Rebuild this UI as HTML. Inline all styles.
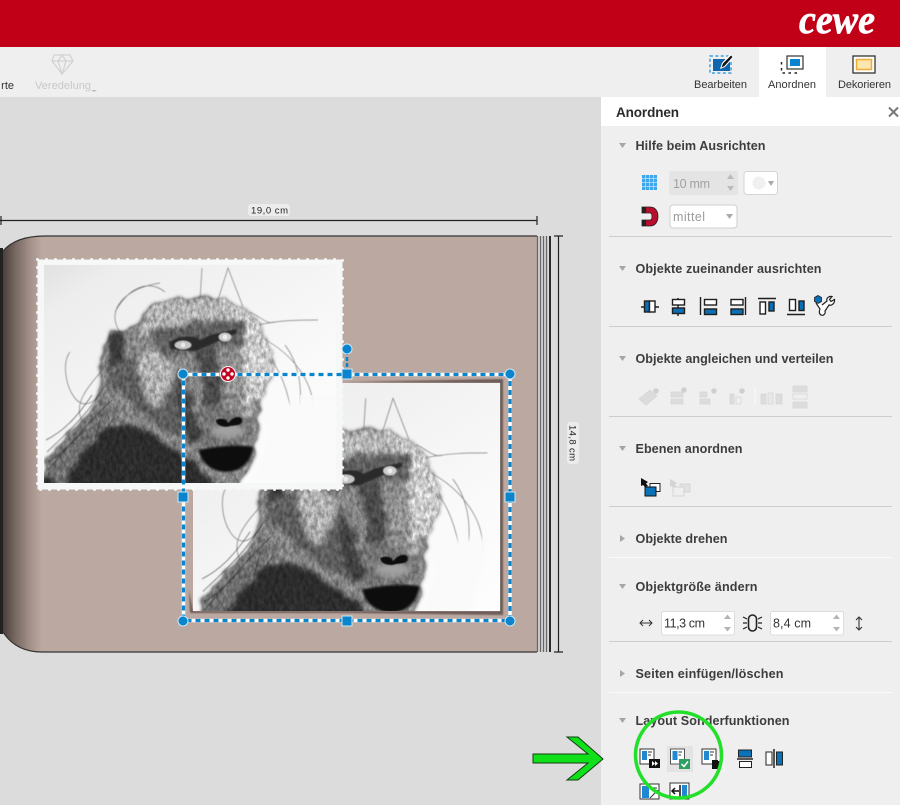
<!DOCTYPE html>
<html><head><meta charset="utf-8"><title>Anordnen</title>
<style>html,body{margin:0;padding:0;background:#dcdcdc;width:900px;height:805px;overflow:hidden}svg{display:block}
text{font-family:"Liberation Sans",sans-serif}
.h{font-weight:bold;font-size:12.600px;fill:#3d3d3d}.t{font-size:11px;fill:#333}</style></head><body>
<svg width="900" height="805" viewBox="0 0 900 805" xmlns="http://www.w3.org/2000/svg">
<defs>
<filter id="fur" x="-10%" y="-10%" width="120%" height="120%" color-interpolation-filters="sRGB">
<feTurbulence type="fractalNoise" baseFrequency="0.3 0.17" numOctaves="3" seed="7" result="n"/>
<feColorMatrix in="n" type="matrix" values="1.200 0 0 0 -.1 1.200 0 0 0 -.1 1.200 0 0 0 -.1 0 0 0 0 1" result="g"/>
<feTurbulence type="fractalNoise" baseFrequency="0.05 0.08" numOctaves="2" seed="3" result="n2"/>
<feDisplacementMap in="SourceGraphic" in2="n2" scale="14" xChannelSelector="R" yChannelSelector="G" result="d"/>
<feGaussianBlur in="d" stdDeviation="2.200" result="s"/>
<feComposite in="s" in2="g" operator="arithmetic" k1="0.7" k2="0.65" k3="0" k4="0" result="m"/>
<feComposite in="m" in2="s" operator="in"/>
</filter>
<filter id="b3"><feGaussianBlur stdDeviation="3"/></filter>
<filter id="b1"><feGaussianBlur stdDeviation="1"/></filter>
<filter id="b06" x="-10%" y="-10%" width="120%" height="120%"><feGaussianBlur stdDeviation=".7"/></filter>
<filter id="s1"><feGaussianBlur stdDeviation=".4"/></filter>
<linearGradient id="bg" x1="0" y1="0" x2="1" y2="1"><stop offset="0" stop-color="#c9c9c9"/><stop offset=".28" stop-color="#ededed"/><stop offset=".7" stop-color="#fafafa"/><stop offset="1" stop-color="#fff"/></linearGradient>
<linearGradient id="spine" x1="0" x2="1" y1="0" y2="0"><stop offset="0" stop-color="#4a3f3c"/><stop offset=".3" stop-color="#75665f"/><stop offset=".7" stop-color="#a3918a"/><stop offset="1" stop-color="#bba8a0"/></linearGradient>
<clipPath id="c1"><rect x="44" y="265" width="292" height="218"/></clipPath>
<clipPath id="c2"><rect x="193" y="383" width="307" height="228"/></clipPath>
<g id="monkey">
<rect x="-60" y="230" width="420" height="270" fill="url(#bg)"/>
<g fill="none" stroke="#555" stroke-width=".7" opacity=".75" filter="url(#s1)">
<path d="M200 300L202 268M218 300L228 268L245 312M165 292C150 280 130 285 115 312M120 332C105 310 125 288 160 283M108 380C80 440 55 370 70 352M110 362C84 390 72 405 84 425"/>
<path d="M258 325C280 320 300 320 318 320M262 338C295 355 315 385 313 412M285 345C298 362 302 385 300 405M262 350C280 365 290 395 292 420M250 312C262 318 268 325 275 322"/>
</g>
<g filter="url(#fur)">
<path d="M40 490L42 462C70 435 88 412 100 385C96 365 104 345 110 330C125 335 132 330 140 315C165 293 215 288 240 305C266 325 270 352 260 385C264 420 258 440 252 460C244 478 240 490 236 490Z" fill="#858585"/>
<path d="M215 295C245 302 270 325 274 350C276 375 262 395 258 405C250 370 240 330 215 295Z" fill="#cdcdcd"/>
<path d="M145 310C170 294 215 292 238 310C225 320 170 322 140 338Z" fill="#b3b3b3"/>
<path d="M150 335C175 322 225 318 248 322L244 345L205 350L168 358Z" fill="#5f5f5f"/>
<path d="M108 336L122 333L126 360L110 372Z" fill="#3a3a3a"/>
<path d="M40 490C55 455 90 432 125 425C160 438 185 450 200 470L218 490Z" fill="#2c2c2c"/>
<path d="M40 470C60 445 85 425 100 400L120 410C100 435 75 460 60 490Z" fill="#707070"/>
<path d="M108 378C120 400 150 425 190 442L195 395L170 365L130 360Z" fill="#5d5d5d"/>
<path d="M140 355C155 345 172 355 176 368L158 410C142 395 134 370 140 355Z" fill="#b0b0b0"/>
<path d="M243 345C256 360 258 385 250 415L236 412C234 385 236 365 243 345Z" fill="#c8c8c8"/>
<path d="M196 352L216 346L222 405L205 405Z" fill="#4a4a4a"/>
<path d="M222 352L242 348L246 412L228 408Z" fill="#929292"/>
<path d="M180 375C188 395 195 420 205 442L190 442C178 415 174 392 180 375Z" fill="#3e3e3e"/>
<path d="M198 408C210 403 246 404 252 425L250 446L203 446Z" fill="#737373"/>
</g>
<g filter="url(#b3)"><path d="M262 405C275 420 270 455 246 482L300 483L320 400Z" fill="#fafafa"/><ellipse cx="228" cy="431" rx="17" ry="7" fill="#a2a2a2"/></g>
<path d="M199 450C215 446 240 444 253 447C252 462 240 472 226 472C212 472 200 462 199 450Z" fill="#111" filter="url(#b1)"/>
<path d="M216 420C222 417 228 420 228 423C232 418 240 414 242 420C242 426 236 425 230 426C225 428 216 426 216 420Z" fill="#0c0c0c" filter="url(#s1)"/>
<path d="M170 342C178 335 195 335 200 340L210 335L236 329L237 333L212 344L196 351L170 349Z" fill="#2a2a2a" filter="url(#b06)"/>
<ellipse cx="183" cy="345" rx="8.500" ry="4.500" fill="#c6c6c6" filter="url(#s1)"/>
<circle cx="183" cy="345" r="2.300" fill="#e9e9e9"/>
<ellipse cx="225" cy="337" rx="6.500" ry="4.500" fill="#cecece" filter="url(#s1)"/>
<circle cx="225" cy="337" r="2.300" fill="#eeeeee"/>
<g fill="none" stroke="#222" stroke-width=".7" opacity=".7" filter="url(#s1)">
<path d="M105 385C90 412 70 430 47 452M112 400C90 420 70 445 48 470M118 410C105 435 90 450 70 470M100 420C95 440 92 455 92 470M125 420C115 440 112 452 112 470M92 395C75 420 62 432 46 440M85 430C70 445 60 455 48 462"/>
</g>
</g>
</defs>

<rect width="900" height="805" fill="#dcdcdc"/>
<rect width="900" height="47" fill="#c10018"/>
<text x="799" y="33" font-size="40" font-weight="bold" font-style="italic" fill="#fff" stroke="#fff" stroke-width=".7" stroke-linejoin="round" textLength="76" lengthAdjust="spacingAndGlyphs" style="font-family:'Liberation Serif',serif">cewe</text>

<!-- toolbar -->
<rect y="47" width="900" height="50" fill="#efefef"/>
<rect x="759" y="47" width="67" height="50" fill="#fff"/>
<text x="14" y="89" text-anchor="end" class="t" fill="#444">rte</text>
<g fill="none" stroke="#d2d2d2" stroke-width="1.200"><path d="M54 55H70L73 61L62 74L52 61ZM52 61H73M58 61L62 74L66 61L62 55L58 61"/></g>
<text x="35" y="89" font-size="11" fill="#c8c8c8" textLength="56">Veredelung</text>
<path d="M91 90H97L94 92Z" fill="#bbb"/>
<!-- Bearbeiten icon -->
<rect x="710" y="56" width="21" height="17" fill="none" stroke="#3ba0e0" stroke-width="1.500" stroke-dasharray="3 2.400"/>
<rect x="713" y="59" width="17" height="12" fill="#0c65ad"/>
<path d="M720 69L722 63L730 54L734 57L725 67Z" fill="#fff"/><path d="M721.500 67.500L723 63.500L731 55.500L732.500 57L724.500 66Z" fill="#111"/>
<text x="694" y="88" class="t" textLength="53">Bearbeiten</text>
<!-- Anordnen icon -->
<rect x="787" y="56" width="16" height="13" fill="#fff" stroke="#333" stroke-width="1.200"/>
<rect x="790" y="59" width="10" height="7" fill="#0a84d0"/>
<path d="M781.500 62V73H797" fill="none" stroke="#222" stroke-width="1.500" stroke-dasharray="2.500 3.500"/>
<text x="768" y="88" class="t" textLength="48">Anordnen</text>
<!-- Dekorieren icon -->
<rect x="853" y="56" width="22" height="17" fill="#fff" stroke="#333" stroke-width="1.300"/>
<rect x="856.500" y="59.500" width="15" height="10" fill="#fbe6b0" stroke="#eeaa33" stroke-width="1.500"/>
<text x="838" y="88" class="t" textLength="53">Dekorieren</text>

<!-- book -->
<path d="M3 251C12 241 25 236 45 236H537V652H42C25 652 12 646 3 632Z" fill="#bba8a0"/>
<path d="M3 251C12 241 25 237 42 236V652C25 652 12 645 3 632Z" fill="url(#spine)"/>
<rect x="0" y="248" width="3" height="386" fill="#222"/>
<path d="M3 251C12 241 25 236 45 236H537M3 632C12 646 25 652 42 652H537" fill="none" stroke="#333" stroke-width="1.200"/>
<rect x="537" y="236" width="12" height="416" fill="#dadada"/>
<g stroke="#666" stroke-width="1.300" fill="none"><path d="M537.500 236V652M540.500 236V652M543.500 236V652M546.500 236V652"/></g>
<rect x="549" y="236" width="2" height="416" fill="#2c2c2c"/>
<g stroke="#222" stroke-width="1.200" fill="none"><path d="M0 220.500H537M537 216V225M1 216V225M558.500 236V652M554 236H563M554 652H563"/></g>
<rect x="248" y="204" width="42" height="12" rx="3" fill="#ececec"/>
<text x="251" y="213.500" font-size="9.500" fill="#222" textLength="37">19,0 cm</text>
<g transform="translate(573,443) rotate(90)"><rect x="-21" y="-6" width="42" height="12" rx="3" fill="#ececec"/><text x="-18" y="3.500" font-size="9.500" fill="#222" textLength="36">14,8 cm</text></g>

<!-- photo 2 -->
<path d="M340 382L503 379V615L350 613L190 613L189 590L193 611H500V383Z" fill="#6d5c58" filter="url(#b06)"/>
<g clip-path="url(#c2)"><use href="#monkey" transform="translate(393 560) scale(1.05) translate(-228 -422)"/></g>

<!-- photo 1 -->
<rect x="37.500" y="259.500" width="305" height="230" fill="#f6f8f7"/>
<rect x="37.500" y="259.500" width="305" height="230" fill="none" stroke="#f6f8f7" stroke-width="3" stroke-dasharray="0 9" stroke-linecap="round"/>
<g clip-path="url(#c1)"><use href="#monkey"/></g>
<rect x="300" y="395" width="36" height="88" fill="#f8f9f8" opacity=".85"/>

<!-- selection -->
<g fill="none">
<rect x="183.500" y="374.500" width="326.500" height="246" stroke="#fff" stroke-width="3.500"/>
<rect x="183.500" y="374.500" width="326.500" height="246" stroke="#0a84cc" stroke-width="3.200" stroke-dasharray="5 4"/>
<path d="M347 351V372" stroke="#0a84cc" stroke-width="2.500" stroke-dasharray="4 2"/>
</g>
<g fill="#0a84cc" stroke="#cfe7f5" stroke-width="1">
<circle cx="183" cy="374" r="5"/><circle cx="510" cy="374" r="5"/><circle cx="183" cy="621" r="5"/><circle cx="510" cy="621" r="5"/><circle cx="347" cy="349" r="5"/>
<rect x="342" y="369" width="10" height="10"/><rect x="342" y="616" width="10" height="10"/><rect x="178" y="492" width="10" height="10"/><rect x="505" y="492" width="10" height="10"/>
</g>
<circle cx="228" cy="374" r="7.500" fill="#c10522" stroke="#fff" stroke-width="1"/>
<g fill="#fff"><circle cx="228" cy="370" r="1.700"/><circle cx="228" cy="378" r="1.700"/><circle cx="224" cy="374" r="1.700"/><circle cx="232" cy="374" r="1.700"/></g>

<!-- panel -->
<rect x="601" y="97" width="299" height="708" fill="#efefef"/>
<rect x="601" y="97" width="299" height="29" fill="#fff"/>
<text x="616" y="117" font-size="13.500" font-weight="bold" fill="#2b2b2b" textLength="63">Anordnen</text>
<path d="M889 107.500L898 116.500M898 107.500L889 116.500" stroke="#777" stroke-width="2"/>

<g fill="#a6a6a6">
<path d="M619 143H626L622.500 148Z"/><path d="M619 266H626L622.500 271Z"/><path d="M619 356H626L622.500 361Z"/><path d="M619 446H626L622.500 451Z"/>
<path d="M620 535L625 538.500L620 542Z"/><path d="M619 584H626L622.500 589Z"/><path d="M620 670L625 673.500L620 677Z"/><path d="M619 718H626L622.500 723Z"/>
</g>
<text x="635.500" y="150" class="h" textLength="130">Hilfe beim Ausrichten</text>
<text x="635.500" y="273" class="h" textLength="186">Objekte zueinander ausrichten</text>
<text x="635.500" y="363" class="h" textLength="198">Objekte angleichen und verteilen</text>
<text x="635.500" y="453" class="h" textLength="107">Ebenen anordnen</text>
<text x="635.500" y="543" class="h" textLength="92">Objekte drehen</text>
<text x="635.500" y="591" class="h" textLength="122">Objektgröße ändern</text>
<text x="635.500" y="678" class="h" textLength="148">Seiten einfügen/löschen</text>
<text x="635.500" y="725" class="h" textLength="154">Layout Sonderfunktionen</text>

<g stroke="#cdcdcd" stroke-width="1"><path d="M609 236.500H892M609 326.500H892M609 416.500H892M609 506.500H892M609 641.500H892"/></g>
<g stroke="#fbfbfb" stroke-width="1"><path d="M609 557.500H892M609 692.500H892"/></g>

<!-- Hilfe controls -->
<rect x="642" y="175" width="15" height="15" fill="#3ea6ea"/>
<path d="M642 178.500H657M642 182.500H657M642 186.500H657M645.500 175V190M649.500 175V190M653.500 175V190" stroke="#bfe2f8" stroke-width=".7"/>
<rect x="669" y="171" width="69" height="24" rx="2" fill="#e4e4e4"/>
<text x="673" y="188" font-size="12.500" fill="#a0a0a0" textLength="37">10 mm</text>
<path d="M727 179L730.500 174L734 179ZM727 186H734L730.500 191Z" fill="#bcbcbc"/>
<rect x="744" y="171.500" width="33.500" height="23" rx="3" fill="#fff" stroke="#d4d4d4"/>
<circle cx="759" cy="183" r="6.500" fill="#f0f0f0"/>
<path d="M768 181H774L771 186Z" fill="#a8a8a8"/>
<path d="M642 207H650C656 207 658 212 658 216.500C658 222 655 226 650 226H642V220H650C651.500 220 652 218 652 216.500C652 215 651.500 213 650 213H642Z" fill="#b80d2c" stroke="#222" stroke-width=".8"/>
<rect x="642" y="207" width="4" height="6" fill="#222"/><rect x="642" y="220" width="4" height="6" fill="#222"/>
<rect x="670" y="205" width="67" height="23" rx="3" fill="#fff" stroke="#cfcfcf"/>
<text x="673" y="221" font-size="12.500" fill="#9a9a9a" textLength="32">mittel</text>
<path d="M726 214H733L729.500 219Z" fill="#aaa"/>

<!-- align row -->
<g stroke="#1f1f1f" stroke-width="1.400" fill="#fff">
<path d="M641 307H659" fill="none"/><rect x="644.500" y="301" width="5" height="11" fill="#0a6fb5"/><rect x="649.500" y="301" width="5.500" height="11"/>
<path d="M678 298V316" fill="none"/><rect x="672.500" y="299.500" width="12" height="5.500"/><rect x="672.500" y="308" width="12" height="5.500" fill="#0a6fb5"/>
<path d="M700.500 297V315" fill="none"/><rect x="704.500" y="299.500" width="12" height="5.500"/><rect x="704.500" y="309" width="12" height="5.500" fill="#0a6fb5"/>
<path d="M745.500 297V315" fill="none"/><rect x="731" y="299.500" width="12" height="5.500"/><rect x="731" y="309" width="12" height="5.500" fill="#0a6fb5"/>
<path d="M758 298.500H776" fill="none"/><rect x="760" y="302" width="5.500" height="12"/><rect x="769" y="302" width="5" height="9" fill="#0a6fb5"/>
<path d="M787 314.500H805" fill="none"/><rect x="789.500" y="299.500" width="6" height="11"/><rect x="799" y="301" width="5" height="9.500" fill="#0a6fb5"/>
</g>
<path d="M818 295.500L821.500 297.500V301.500L818 303.500L814.500 301.500V297.500Z" fill="#0a6fb5" stroke="#222" stroke-width=".8"/>
<path d="M822 305L827 301C826 298 829 296 832 296.500L829.500 299.500L831 301.500L834.500 299.500C835 303 832 306 829 305L825 311C826 314 823 316 821 315C819 314 819 311 820 309L816 303" fill="#fff" stroke="#222" stroke-width="1.200"/>

<!-- disabled row -->
<g fill="#dcdcdc" stroke="#d6d6d6" stroke-width=".8">
<path d="M639 399L650 390L657 396L646 405Z"/><circle cx="656" cy="391" r="2.500" fill="#cfcfcf"/>
<rect x="671" y="392" width="12" height="5"/><rect x="671" y="399" width="12" height="5"/><circle cx="684" cy="390" r="2.500" fill="#cfcfcf"/>
<rect x="700" y="392" width="7" height="5"/><rect x="700" y="399" width="10" height="5"/><circle cx="714" cy="391" r="2.500" fill="#cfcfcf"/>
<rect x="730" y="394" width="4" height="10"/><rect x="736" y="397" width="5" height="7" fill="#efefef"/><circle cx="742" cy="391" r="2.500" fill="#cfcfcf"/>
<rect x="761" y="394" width="5" height="10"/><rect x="768" y="393" width="5" height="11" fill="#e8e8e8"/><rect x="776" y="394" width="6" height="10"/>
<rect x="793" y="386" width="14" height="6"/><rect x="793" y="394" width="14" height="5" fill="#efefef"/><rect x="793" y="402" width="14" height="6"/>
</g>
<path d="M755 388V405" stroke="#fafafa" stroke-width="1"/>

<!-- Ebenen -->
<rect x="650" y="483.500" width="10" height="8" fill="#fff" stroke="#222" stroke-width="1"/>
<rect x="645" y="487" width="11" height="9" fill="#0a72b8" stroke="#111" stroke-width="1"/>
<path d="M641 478L648 482L646 483.500L648 486L645 487L643 485L641 486Z" fill="#111"/>
<rect x="680" y="484" width="10" height="8" fill="#e2e2e2" stroke="#d4d4d4"/>
<rect x="673" y="487" width="11" height="9" fill="#efefef" stroke="#d4d4d4"/>
<path d="M670 479L677 483L675 484.500L677 487L674 487.500L672 486L670 487Z" fill="#d4d4d4"/>

<!-- size -->
<path d="M640 623H652M643 620L640 623L643 626M649 620L652 623L649 626" fill="none" stroke="#333" stroke-width="1"/>
<rect x="661.500" y="611.500" width="73" height="23.500" rx="2" fill="#fff" stroke="#dcdcdc"/>
<text x="664" y="627.500" font-size="12.500" fill="#333" textLength="41">11,3 cm</text>
<path d="M724 619L727.500 614.500L731 619ZM724 627H731L727.500 631.500Z" fill="#b4b4b4"/>
<rect x="748.500" y="615" width="8" height="16" rx="4" fill="none" stroke="#222" stroke-width="1.600"/>
<path d="M743 617L747 619M743 623H747M743 629L747 627M762 617L758 619M762 623H758M762 629L758 627" stroke="#222" stroke-width="1.200"/>
<rect x="770.500" y="611.500" width="73" height="23.500" rx="2" fill="#fff" stroke="#dcdcdc"/>
<text x="773" y="627.500" font-size="12.500" fill="#333" textLength="38">8,4 cm</text>
<path d="M833 619L836.500 614.500L840 619ZM833 627H840L836.500 631.500Z" fill="#b4b4b4"/>
<path d="M859 617V630M856 620L859 617L862 620M856 627L859 630L862 627" fill="none" stroke="#333" stroke-width="1.100"/>

<!-- layout row -->
<rect x="667" y="746" width="26" height="26" fill="#e3e3e3"/>
<g>
<rect x="640" y="749" width="14" height="15" fill="#fff" stroke="#333"/><rect x="642" y="751" width="5" height="9" fill="#1e88d0"/><path d="M648 752H652M648 755H651" stroke="#333"/>
<rect x="649" y="759" width="11" height="9" fill="#111"/><path d="M652 761L655 763.500L652 766ZM655 761L658 763.500L655 766Z" fill="#fff"/>
<rect x="670.500" y="749" width="14" height="15" fill="#fff" stroke="#555"/><rect x="672.500" y="751" width="5" height="9" fill="#1e88d0"/><path d="M678.500 752H682M678.500 755H681" stroke="#333"/>
<rect x="679" y="759" width="11" height="10" fill="#2f9e62"/><path d="M681.500 764L684 766.500L688 761.500" fill="none" stroke="#fff" stroke-width="1.500"/>
<rect x="702" y="749" width="14" height="15" fill="#fff" stroke="#333"/><rect x="704" y="751" width="5" height="9" fill="#1e88d0"/><path d="M710 752H714M710 755H713" stroke="#333"/>
<path d="M712 760H721V769H712Z" fill="#111"/><path d="M718 757H722V761H718Z" fill="#fff"/>
<path d="M724 748V772" stroke="#f8f8f8"/>
<rect x="738.500" y="750" width="13" height="7" fill="#0a72b8" stroke="#222"/><path d="M737 759H753" stroke="#222" stroke-width="1.500"/><rect x="739.500" y="761.500" width="12" height="6" fill="#fff" stroke="#222"/>
<rect x="766" y="752" width="6" height="13" fill="#fff" stroke="#222"/><path d="M774 749V768" stroke="#222" stroke-width="1.500"/><rect x="776.500" y="752" width="6" height="13" fill="#0a72b8" stroke="#222"/>
<rect x="640" y="784" width="19" height="15" fill="#fff" stroke="#333"/><rect x="642" y="786" width="7" height="12" fill="#1e88d0"/><path d="M650 788H657M650 798L658 790" stroke="#333"/>
<rect x="670" y="783" width="19" height="16" fill="#fff" stroke="#333"/><rect x="682" y="785" width="5" height="11" fill="#1e88d0"/><path d="M680 785V797" stroke="#111" stroke-width="1.500"/><path d="M672 791H679M675 788L672 791L675 794" fill="none" stroke="#111" stroke-width="1.500"/>
</g>

<!-- annotations -->
<circle cx="678.500" cy="755" r="43" fill="none" stroke="#22e02a" stroke-width="3.500"/>
<path d="M567 737H578L603 759L578 780H567L588 763H533V754H588Z" fill="#0fe01a" stroke="#143d14" stroke-width="1"/>
</svg>
</body></html>
